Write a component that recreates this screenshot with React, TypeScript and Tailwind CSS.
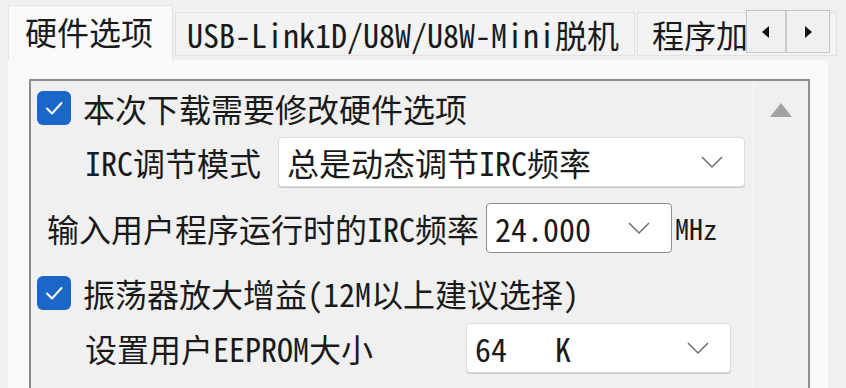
import React from 'react';

const font = "font-['Noto_Sans_Mono_CJK_SC','Noto_Sans_CJK_SC',sans-serif]";

function Check() {
  return (
    <div className="w-[34px] h-[34px] rounded-[6px] bg-[#1b66c9] flex items-center justify-center shrink-0">
      <svg width="34" height="34" viewBox="0 0 34 34">
        <polyline points="10,17.5 15,22.5 24.5,12" fill="none" stroke="#ffffff" strokeWidth="2" strokeLinecap="round" strokeLinejoin="round" />
      </svg>
    </div>
  );
}

function Chevron() {
  return (
    <svg width="24" height="14" viewBox="0 0 24 14">
      <polyline points="2,2 12,12 22,2" fill="none" stroke="#6e6e6e" strokeWidth="1.5" />
    </svg>
  );
}

function Select({ value, width, dark }: { value: string; width: string; dark?: boolean }) {
  return (
    <div
      className={`${width} h-[50px] bg-white rounded-[4px] border flex items-center justify-between pl-[8px] pr-[20px] shrink-0 ${
        dark ? 'border-[#8f8f8f]' : 'border-[#dcdcdc] shadow-[0_1px_0_#c8c8c8]'
      }`}
    >
      <span className="whitespace-pre text-[32px] leading-none text-[#1a1a1a]">{value}</span>
      <Chevron />
    </div>
  );
}

export default function App() {
  return (
    <div className={`w-[846px] h-[388px] bg-[#f0f0f0] overflow-hidden flex flex-col pl-[8px] ${font} text-[#1a1a1a]`}>
      {/* tab strip */}
      <div className="h-[60px] flex items-end shrink-0">
        <div className="w-[165px] h-[55px] shrink-0 bg-[#f9f9f9] border-t border-l border-r border-[#e4e4e4] flex items-center pl-[16px] pb-[4px] text-[32px] leading-none">
          硬件选项
        </div>
        <div className="flex-1 min-w-0 h-[46px] flex items-start overflow-hidden mb-[2px] ml-[2px]">
          <div className="w-[460px] h-[44px] bg-[#f3f3f3] border border-[#e2e2e2] flex items-center pl-[11px] text-[32px] leading-none shrink-0">
            USB-Link1D/U8W/U8W-Mini脱机
          </div>
          <div className="w-[200px] h-[44px] bg-[#f3f3f3] border border-[#e2e2e2] flex items-center pl-[14px] text-[32px] leading-none shrink-0 ml-[2px]">
            程序加载
          </div>
        </div>
      </div>

      {/* tab page */}
      <div className="w-[820px] flex-1 bg-[#f9f9f9] pl-[21px] pt-[19px] relative">
        {/* scroll arrows overlaid on tab strip */}
        <div className="absolute left-[738px] top-[-50px] flex h-[43px] bg-[#f0f0f0] border border-[#c4c4c4]">
          <div className="w-[40px] flex items-center justify-center border-r-2 border-[#c9c9c9]">
            <svg width="8" height="12" viewBox="0 0 8 12">
              <polygon points="7,0 7,12 0,6" fill="#111111" />
            </svg>
          </div>
          <div className="w-[42px] flex items-center justify-center">
            <svg width="8" height="12" viewBox="0 0 8 12">
              <polygon points="1,0 1,12 8,6" fill="#111111" />
            </svg>
          </div>
        </div>

        <div className="w-[781px] h-full bg-[#f0f0f0] border-t-2 border-l-2 border-r-2 border-[#8c8c8c] flex">
          <div className="w-[722px] flex flex-col pt-[10px]">
            <div className="flex items-center pl-[6px] h-[34px] gap-[12px]">
              <Check />
              <span className="text-[32px] leading-none">本次下载需要修改硬件选项</span>
            </div>

            <div className="flex items-center mt-[12px] pl-[54px]">
              <span className="text-[32px] leading-none w-[193px] shrink-0">IRC调节模式</span>
              <Select value="总是动态调节IRC频率" width="w-[467px]" />
            </div>

            <div className="flex items-center mt-[16px] pl-[16px]">
              <span className="text-[32px] leading-none w-[439px] shrink-0">输入用户程序运行时的IRC频率</span>
              <Select value="24.000" width="w-[186px]" dark />
              <span className="text-[28px] leading-none ml-[3px]">MHz</span>
            </div>

            <div className="flex items-center pl-[6px] h-[34px] gap-[12px] mt-[23px]">
              <Check />
              <span className="text-[32px] leading-none">振荡器放大增益(12M以上建议选择)</span>
            </div>

            <div className="flex items-center mt-[13px] pl-[54px]">
              <span className="text-[32px] leading-none w-[381px] shrink-0">设置用户EEPROM大小</span>
              <Select value="64   K" width="w-[265px]" />
            </div>
          </div>

          {/* vertical scrollbar */}
          <div className="flex-1 border-l border-[#fbfbfb] flex justify-center pt-[21px]">
            <svg width="24" height="16" viewBox="0 0 24 16">
              <polygon points="12,1 23,15 1,15" fill="#a3a3a3" />
            </svg>
          </div>
        </div>
      </div>
    </div>
  );
}
